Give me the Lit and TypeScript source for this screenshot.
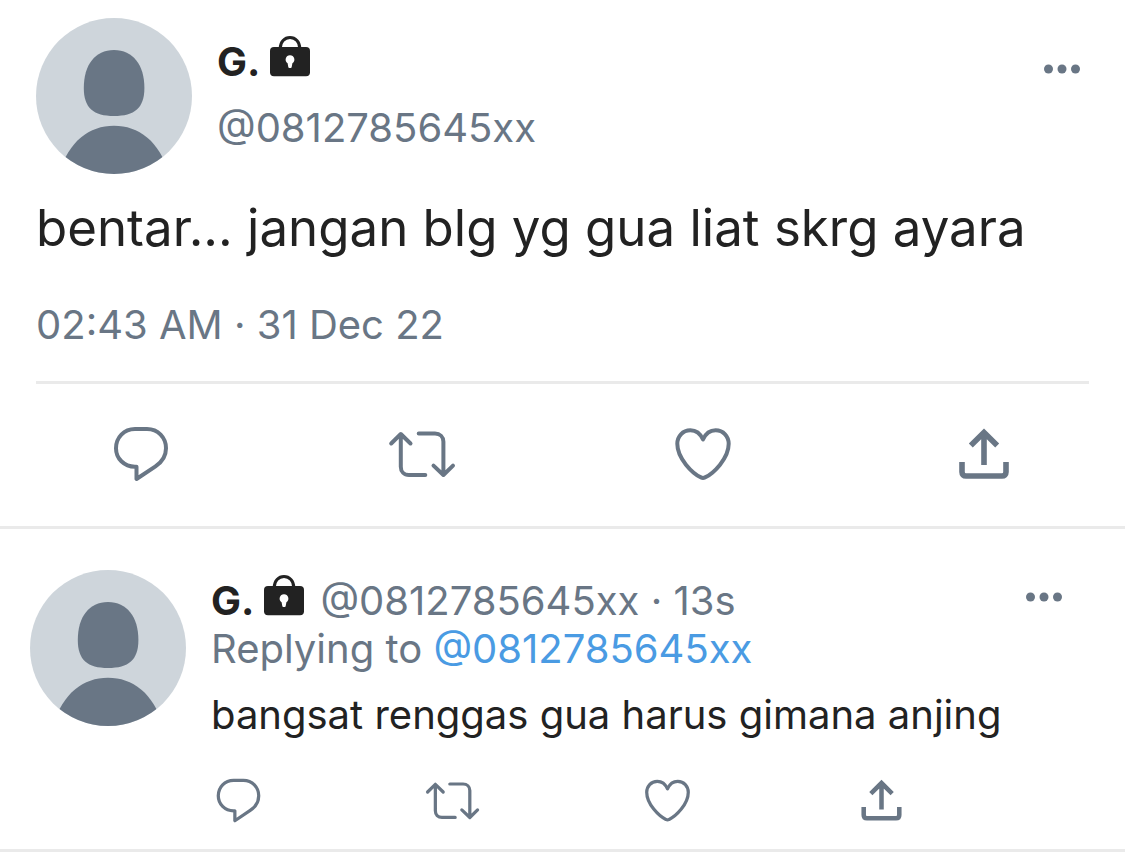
import { LitElement, html, css, svg } from "lit";
import { customElement, property } from "lit/decorators.js";

type Action = { label: string; shape: unknown };

const actions: Action[] = [
  {
    label: "Reply",
    shape: svg`<path d="M30 11H42C53 11 61 19.6 61 30.2C61 38 57 44 50.5 48.3L31.5 61V48.7H30C19 48.7 11 40.4 11 30.2C11 19.4 19 11 30 11Z" />`,
  },
  {
    label: "Repost",
    shape: svg`<path d="M5.2 25.5L14.8 16L24.5 25.5M14.8 16.5V48.7C14.8 53.5 18 57 23 57H39.3M32.7 15.6H49C54 15.6 57.4 19 57.4 23.7V56.5M47.5 47.6L57.4 57L67 47.6" />`,
  },
  {
    label: "Like",
    shape: svg`<path d="M36 21.5C33.4 15.8 28.6 12.3 23.4 12.3C15.6 12.3 10.3 18.4 10.3 25.8C10.3 40.5 25.5 55.5 34 59.4C35.4 60.1 36.6 60.1 38 59.4C46.5 55.5 61.7 40.5 61.7 25.8C61.7 18.4 56.4 12.3 48.6 12.3C43.4 12.3 38.6 15.8 36 21.5Z" />`,
  },
  {
    label: "Share",
    shape: svg`<path class="heavy" d="M14 44V54C14 56.5 15.5 58 18 58H54C56.5 58 58 56.5 58 54V44M36 47V15M22.8 27.6L36 14.4L49.2 27.6" />`,
  },
];

@customElement("user-avatar")
class UserAvatar extends LitElement {
  static styles = css`
    :host { display: block; flex: none; width: 156px; height: 156px; border-radius: 50%; overflow: hidden; background: #ced5db; }
    svg { display: block; fill: #697685; }
  `;
  render() {
    return html`<svg viewBox="0 0 156 156" role="img" aria-label="Profile picture">
      <path d="M78 32C97 32 108.4 47 108.4 70C108.4 90 98.5 98 78 98C57.500 98 47.800 90 47.800 70C47.800 47 59 32 78 32Z" />
      <path d="M20 166C29 126 51 107.800 78 107.800C105 107.800 127 126 136 166Z" />
    </svg>`;
  }
}

@customElement("lock-badge")
class LockBadge extends LitElement {
  static styles = css`
    :host { display: block; flex: none; width: 40px; height: 41px; }
    svg { display: block; }
    .body { fill: #222; }
    .shackle { fill: none; stroke: #222; stroke-width: 3; }
    .hole { fill: #fff; }
  `;
  render() {
    return html`<svg width="40" height="41" viewBox="0 0 40 41" role="img" aria-label="Protected account">
      <path class="shackle" d="M10.300 12C10.300 6 14.500 1.500 20 1.500S29.700 6 29.700 12" />
      <rect class="body" y="11" width="40" height="29.300" rx="4" />
      <path class="hole" d="M20 19.300A4.300 4.300 0 0 1 22.400 27.200L21.600 31.400Q20 32.800 18.400 31.400L17.600 27.200A4.300 4.300 0 0 1 20 19.300Z" />
    </svg>`;
  }
}

@customElement("more-button")
class MoreButton extends LitElement {
  static styles = css`
    :host { display: block; flex: none; }
    button { display: block; padding: 0; border: 0; background: none; cursor: pointer; }
    svg { display: block; fill: #697685; }
  `;
  render() {
    return html`<button type="button" aria-label="More">
      <svg width="36" height="36" viewBox="0 0 36 36">
        <circle cx="4.500" cy="18" r="4.500" /><circle cx="18" cy="18" r="4.500" /><circle cx="31.500" cy="18" r="4.500" />
      </svg>
    </button>`;
  }
}

@customElement("action-bar")
class ActionBar extends LitElement {
  @property({ type: Boolean, reflect: true }) compact = false;
  static styles = css`
    :host { display: grid; grid-template-columns: repeat(4, 1fr); justify-items: center; }
    :host([compact]) { display: flex; justify-content: space-between; width: 79%; }
    button { padding: 0; border: 0; background: none; cursor: pointer; }
    svg { display: block; width: 68px; height: 68px; fill: none; stroke: #697685; stroke-width: 4; stroke-linecap: round; stroke-linejoin: round; }
    :host([compact]) svg { width: 55px; height: 55px; }
    .heavy { stroke-width: 5.6; stroke-linecap: butt; stroke-linejoin: miter; }
  `;
  render() {
    return actions.map(
      (a) => html`<button type="button" aria-label=${a.label}><svg viewBox="2 2 68 68">${a.shape}</svg></button>`
    );
  }
}

@customElement("app-root")
class AppRoot extends LitElement {
  static styles = css`
    :host { display: block; background: #fff; color: #222; font: 40px/48px Inter, "Liberation Sans", sans-serif; }
    p, h1, h2 { margin: 0; font-weight: 400; font-size: inherit; }
    .post { padding-top: 18px; padding-bottom: 38px; border-bottom: 3px solid #eaeaea; }
    .inner { padding: 0 36px; }
    .head { display: flex; gap: 25px; }
    .who { flex: 1; min-width: 0; padding-top: 11px; line-height: 66px; }
    .name { display: flex; align-items: center; gap: 10px; }
    .name lock-badge { padding-bottom: 12px; }
    .name b { font-weight: 700; }
    .muted { color: #697685; }
    .head more-button { padding: 33px 9px 0 0; }
    .text { margin-top: 22px; font-size: 51px; line-height: 64px; }
    .date { display: block; margin-top: 41px; }
    .rule { height: 3px; margin: 32px 0 36px; border: 0; background: #eaeaea; }
    .reply { display: flex; gap: 25px; padding: 41px 30px 21px; border-bottom: 3px solid #eaeaea; }
    .content { flex: 1; min-width: 0; padding-top: 7px; }
    .line { display: flex; height: 48px; }
    .line .name { flex: 1; }
    .line .muted { padding-left: 6px; }
    .line more-button { padding: 2px 33px 0 0; }
    a { color: #4a9be3; text-decoration: none; }
    .answer { margin-top: 18px; }
    .content action-bar { margin-top: 34px; }
  `;
  render() {
    return html`<main>
      <article class="post">
        <div class="inner">
          <header class="head">
            <user-avatar></user-avatar>
            <div class="who">
              <h1 class="name"><b>G.</b><lock-badge></lock-badge></h1>
              <p class="muted">@0812785645xx</p>
            </div>
            <more-button></more-button>
          </header>
          <p class="text">bentar... jangan blg yg gua liat skrg ayara</p>
          <time class="date muted" datetime="2022-12-31T02:43">02:43 AM · 31 Dec 22</time>
          <hr class="rule" />
        </div>
        <action-bar></action-bar>
      </article>
      <article class="reply">
        <user-avatar></user-avatar>
        <div class="content">
          <header class="line">
            <h2 class="name"><b>G.</b><lock-badge></lock-badge><span class="muted">@0812785645xx · 13s</span></h2>
            <more-button></more-button>
          </header>
          <p class="muted">Replying to <a href="#">@0812785645xx</a></p>
          <p class="answer">bangsat renggas gua harus gimana anjing</p>
          <action-bar compact></action-bar>
        </div>
      </article>
    </main>`;
  }
}
